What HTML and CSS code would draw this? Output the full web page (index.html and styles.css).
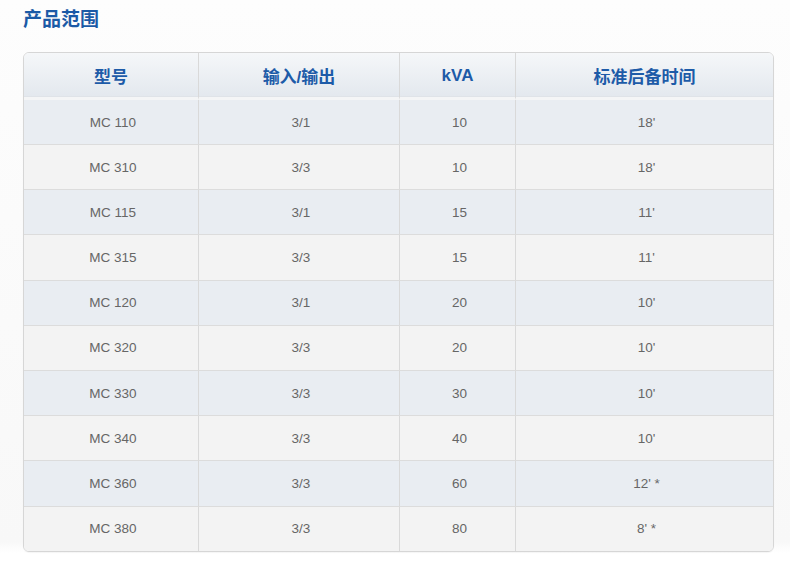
FILE: index.html
```html
<!DOCTYPE html>
<html lang="zh">
<head>
<meta charset="utf-8">
<title>产品范围</title>
<link rel="stylesheet" href="styles.css">
</head>
<body>
<div class="page">
  <h2 class="title">产品范围</h2>
  <div class="table-wrap">
    <table class="range">
      <colgroup>
        <col class="c1"><col class="c2"><col class="c3"><col class="c4">
      </colgroup>
      <thead>
        <tr><th>型号</th><th>输入/输出</th><th><span class="latin">kVA</span></th><th>标准后备时间</th></tr>
      </thead>
      <tbody>
        <tr><td>MC 110</td><td>3/1</td><td>10</td><td>18'</td></tr>
        <tr><td>MC 310</td><td>3/3</td><td>10</td><td>18'</td></tr>
        <tr><td>MC 115</td><td>3/1</td><td>15</td><td>11'</td></tr>
        <tr><td>MC 315</td><td>3/3</td><td>15</td><td>11'</td></tr>
        <tr><td>MC 120</td><td>3/1</td><td>20</td><td>10'</td></tr>
        <tr><td>MC 320</td><td>3/3</td><td>20</td><td>10'</td></tr>
        <tr><td>MC 330</td><td>3/3</td><td>30</td><td>10'</td></tr>
        <tr><td>MC 340</td><td>3/3</td><td>40</td><td>10'</td></tr>
        <tr><td>MC 360</td><td>3/3</td><td>60</td><td>12' *</td></tr>
        <tr><td>MC 380</td><td>3/3</td><td>80</td><td>8' *</td></tr>
      </tbody>
    </table>
  </div>
</div>
</body>
</html>
```
FILE: styles.css
```css
html, body {
  margin: 0;
  padding: 0;
  background: #fbfbfb;
}
.page {
  width: 790px;
  height: 564px;
  box-sizing: border-box;
  padding: 6px 16px 0 23px;
  background: linear-gradient(#fdfdfd, #f8f8f8 96%, #ffffff 98%);
  font-family: "Liberation Sans", Arial, "Noto Sans CJK SC", sans-serif;
}
.title {
  margin: 0;
  font-size: 19px;
  line-height: 24px;
  font-weight: bold;
  color: #1b5aa6;
  font-family: "Noto Sans CJK SC", "Liberation Sans", sans-serif;
}
.table-wrap {
  margin-top: 22px;
  width: 749px;
  border: 1px solid #d6d6d6;
  border-radius: 6px;
  overflow: hidden;
  box-shadow: 0 1px 1px rgba(0,0,0,0.04);
}
.range {
  width: 100%;
  border-collapse: separate;
  border-spacing: 0;
  table-layout: fixed;
}
.c1 { width: 174px; }
.c2 { width: 201px; }
.c3 { width: 116px; }
.c4 { width: auto; }
.range th {
  height: 44px;
  padding: 0;
  background: linear-gradient(#f5f7f9, #e3e8ee);
  color: #1d5ba8;
  font-size: 17px;
  font-weight: bold;
  font-family: "Liberation Sans", Arial, "Noto Sans CJK SC", sans-serif;
  border-bottom: 3px solid #f4f5f6;
  box-shadow: inset 0 -1px 0 #dfe3e8;
}
.latin {
  vertical-align: -2px;
}
.range th + th,
.range td + td {
  border-left: 1px solid #d9d9d9;
}
.range td {
  height: 44.2px;
  padding: 0 0 0 4px;
  text-align: center;
  color: #666666;
  font-size: 13.5px;
  border-top: 1px solid #dcdcdc;
}
.range tbody tr:first-child td {
  border-top: 0;
  height: 44px;
}
.range tbody tr:nth-child(odd) td {
  background: #e9edf2;
}
.range tbody tr:nth-child(even) td {
  background: #f3f3f3;
}
```
